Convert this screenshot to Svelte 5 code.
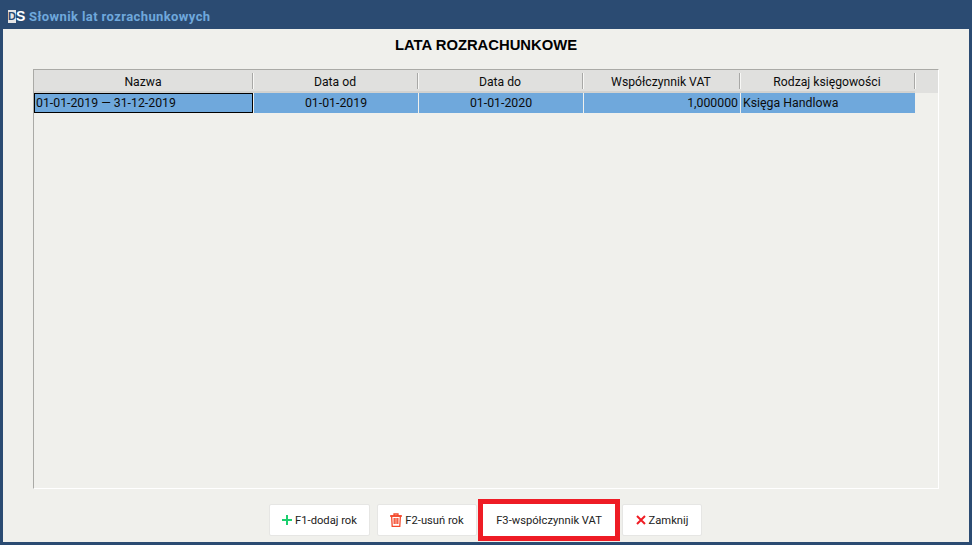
<script lang="ts">
	const columns = [
		{ label: 'Nazwa', width: 219 },
		{ label: 'Data od', width: 165 },
		{ label: 'Data do', width: 165 },
		{ label: 'Współczynnik VAT', width: 157 },
		{ label: 'Rodzaj księgowości', width: 175 },
	];
	const row = [
		{ text: '01-01-2019 — 31-12-2019', align: 'left', focus: true },
		{ text: '01-01-2019', align: 'center' },
		{ text: '01-01-2020', align: 'center' },
		{ text: '1,000000', align: 'right' },
		{ text: 'Księga Handlowa', align: 'left' },
	];
</script>

<div class="window">
	<header class="titlebar">
		<span class="logo"><span class="logo-d">D</span><span class="logo-s">S</span></span>
		<span class="title">Słownik lat rozrachunkowych</span>
	</header>

	<main class="content">
		<h1>LATA ROZRACHUNKOWE</h1>

		<div class="grid">
			<div class="head">
				{#each columns as col}
					<div class="th" style="width:{col.width}px"><div class="label">{col.label}</div></div>
				{/each}
			</div>
			<div class="row">
				{#each row as cell, i}
					<div class="td {cell.align}" class:focus={cell.focus} style="width:{columns[i].width}px">{cell.text}</div>
				{/each}
			</div>
		</div>

		<footer class="actions">
			<button class="btn first">
				<svg width="10" height="10" viewBox="0 0 10 10"><path d="M5 0v10M0 5h10" stroke="#1ccf6e" stroke-width="2" fill="none" /></svg>
				F1-dodaj rok
			</button>
			<button class="btn second">
				<svg width="12" height="14" viewBox="0 0 12 14" fill="none" stroke="#f4472a" stroke-width="1.3">
					<path d="M0 3h12M4 3V1h4v2" />
					<path d="M1.6 3l.6 10.3h7.6L10.4 3z" />
					<path d="M4.2 5v6M6 5v6M7.8 5v6" />
				</svg>
				F2-usuń rok
			</button>
			<button class="btn third">F3-współczynnik VAT</button>
			<button class="btn fourth">
				<svg width="10" height="10" viewBox="0 0 10 10"><path d="M1 1l8 8M9 1l-8 8" stroke="#f01c24" stroke-width="2" fill="none" /></svg>
				Zamknij
			</button>
		</footer>
	</main>
</div>

<style>
	:global(body) {
		margin: 0;
		background: #2b4b72;
	}

	.window {
		width: 972px;
		height: 545px;
		box-sizing: border-box;
		padding: 0 3px 3px;
		display: flex;
		flex-direction: column;
		background: #2b4b72;
		font-family: Roboto, sans-serif;
		font-size: 12.2px;
		color: #0c0c0c;
	}

	.titlebar {
		height: 29px;
		flex-shrink: 0;
		display: flex;
		align-items: center;
		gap: 6px;
		padding: 4px 0 0 5px;
		box-sizing: border-box;
	}

	.logo {
		display: flex;
		height: 13px;
		font-weight: 700;
		line-height: 13px;
	}

	.logo-d {
		width: 8px;
		background: #e6e6e6;
		color: #2b4b72;
		font-family: "Liberation Sans", sans-serif;
		font-size: 11px;
		text-align: center;
		overflow: hidden;
	}

	.logo-s {
		width: 7px;
		color: #fff;
		font-family: "Liberation Sans", sans-serif;
		font-size: 14px;
		text-align: center;
	}

	.title {
		color: #6fa8dc;
		font-weight: 700;
		font-size: 13px;
		letter-spacing: 0.4px;
	}

	.content {
		flex: 1;
		display: flex;
		flex-direction: column;
		align-items: center;
		background: #f0f0ec;
		padding: 0 30px;
		min-height: 0;
	}

	h1 {
		margin: 8px 0 0;
		height: 32px;
		font-size: 14.8px;
		line-height: 16px;
		font-weight: 700;
		font-family: "Liberation Sans", sans-serif;
		color: #000;
	}

	.grid {
		width: 906px;
		height: 420px;
		flex-shrink: 0;
		box-sizing: border-box;
		border: 1px solid;
		border-color: #aaaaa6 #fff #fff #aaaaa6;
	}

	.head {
		display: flex;
		height: 23px;
		background: #e0e0de;
	}

	.th {
		height: 23px;
		box-sizing: border-box;
		padding-top: 3px;
		border-bottom: 2px solid #d2d2d0;
	}

	.label {
		height: 16px;
		line-height: 18px;
		text-align: center;
		border-right: 1px solid #a8a8a6;
		box-shadow: 1px 0 0 #f8f8f6;
	}

	.row {
		display: flex;
		height: 20px;
	}

	.td {
		height: 20px;
		line-height: 20px;
		font-size: 12.3px;
		box-sizing: border-box;
		background: #6fa8dc;
		border-right: 1px solid #f0f0ec;
		padding: 0 1px;
		white-space: nowrap;
	}

	.td.center { text-align: center; }
	.td.right { text-align: right; padding-right: 2px; }
	.td.left { padding-left: 2px; }

	.td.focus {
		border: 1px solid #000;
		line-height: 18px;
		padding-left: 1px;
		margin-right: 1px;
	}

	.actions {
		display: flex;
		justify-content: center;
		align-items: center;
		margin-top: 10px;
		padding-right: 1px;
	}

	.btn {
		display: flex;
		align-items: center;
		justify-content: center;
		gap: 3px;
		height: 32px;
		box-sizing: border-box;
		border: 1px solid #e6e6e4;
		border-radius: 2px;
		background: #fff;
		font: inherit;
		font-size: 11.2px;
		color: #222;
		padding: 0;
	}

	.first { width: 101px; margin-right: 7px; }
	.second { width: 100px; margin-right: 1px; }

	.third {
		width: 142px;
		height: 42px;
		border: 5px solid #ee1c25;
		border-radius: 0;
		margin-right: 2px;
	}

	.fourth { width: 80px; }
</style>
